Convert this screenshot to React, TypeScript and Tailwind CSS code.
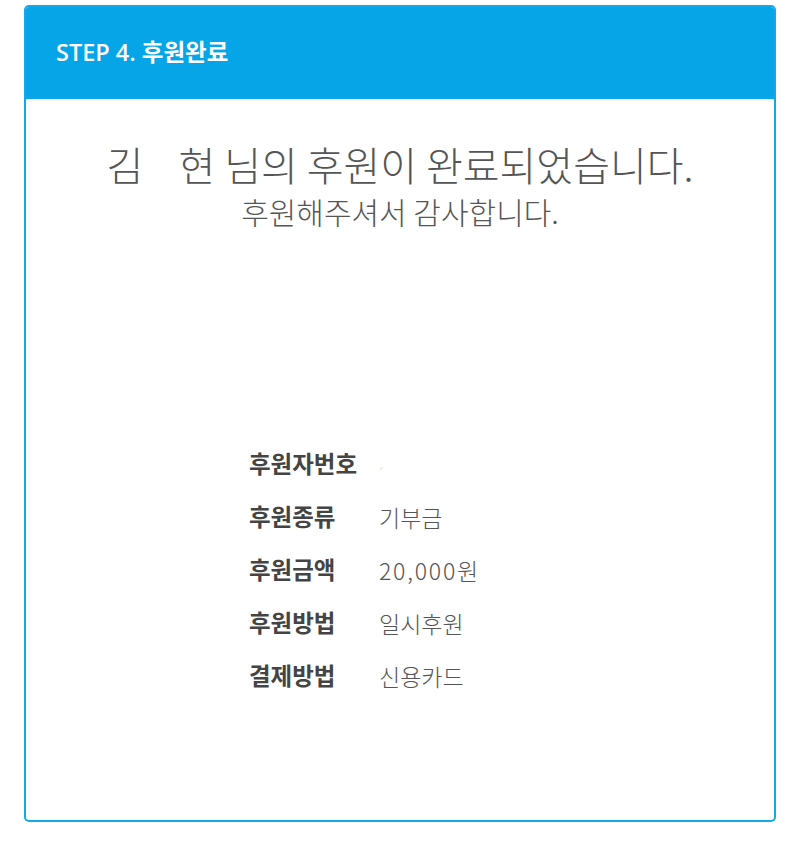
import React from "react";

const rows = [
  { label: "후원자번호", value: "" },
  { label: "후원종류", value: "기부금" },
  { label: "후원금액", value: "20,000원" },
  { label: "후원방법", value: "일시후원" },
  { label: "결제방법", value: "신용카드" },
];

export default function App() {
  return (
    <div className="min-h-screen bg-white pt-[5px] font-['Noto_Sans_CJK_KR',sans-serif]">
      <div className="mx-[24px] h-[817px] overflow-hidden rounded-[5px] border-2 border-[#13a9e8] bg-white">
        {/* header */}
        <div className="flex h-[92px] items-center bg-[#06a5e8] pl-[30px]">
          <h2 className="text-[23.5px] font-semibold text-white font-['Open_Sans','Noto_Sans_CJK_KR',sans-serif]">
            STEP 4. 후원완료
          </h2>
        </div>

        {/* message */}
        <div className="pt-[38px] text-center text-[#555]">
          <p className="text-[40px] leading-[54px] font-light">
            김&nbsp;&nbsp;&nbsp;&nbsp;현 님의 후원이 완료되었습니다.
          </p>
          <p className="text-[30px] leading-[40px] font-light">후원해주셔서 감사합니다.</p>
        </div>

        {/* info */}
        <dl className="mt-[217px] ml-[223px] flex flex-col gap-[21px]">
          {rows.map((r) => (
            <div key={r.label} className="flex h-[32px] items-center">
              <dt className="w-[130px] text-[23.5px] font-bold text-[#444]">{r.label}</dt>
              <dd className="text-[23px] font-light text-[#555]">
                {r.label === "후원금액" ? (
                  <>
                    <span className="tracking-[1.8px]">20,000</span>원
                  </>
                ) : (
                  r.value || <span className="text-[8px] text-[#bbb]">ˊ</span>
                )}
              </dd>
            </div>
          ))}
        </dl>
      </div>
    </div>
  );
}
